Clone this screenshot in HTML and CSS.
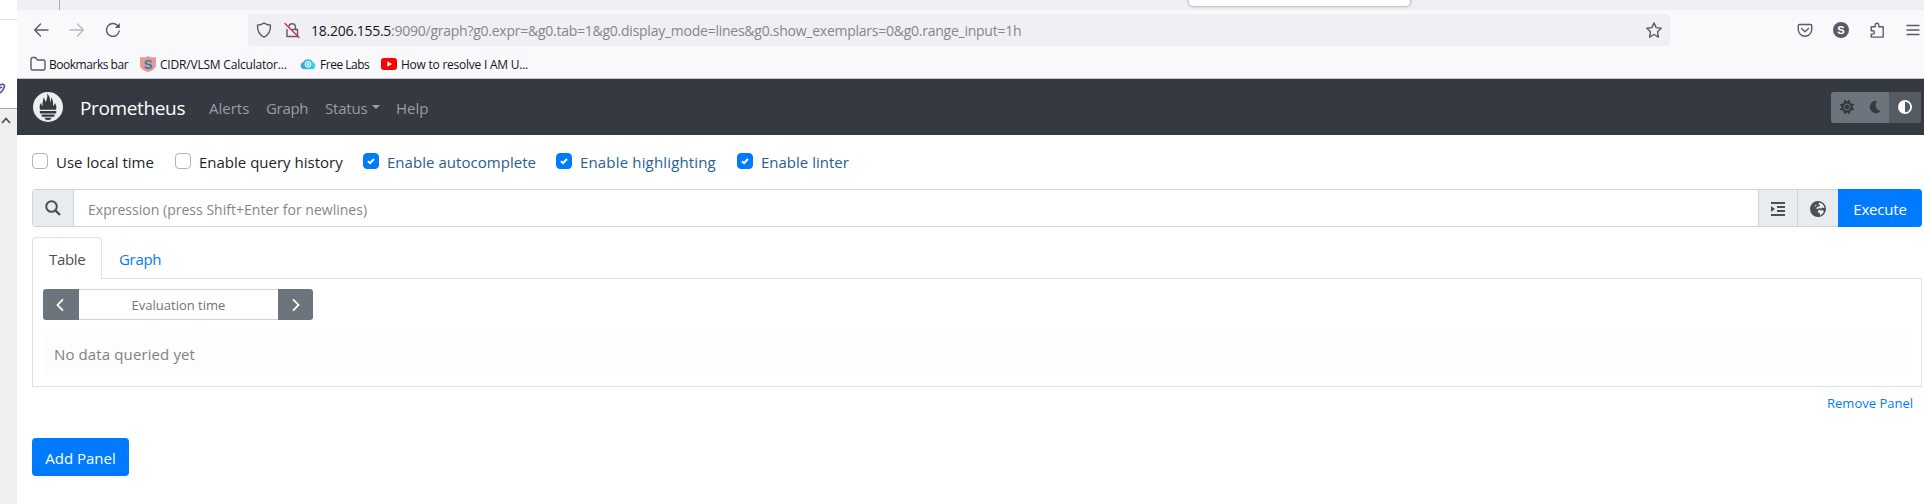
FILE: index.html
```html
<!DOCTYPE html>
<html lang="en">
<head>
<meta charset="utf-8">
<title>Prometheus</title>
<link rel="stylesheet" href="styles.css">
</head>
<body>
<div class="screen">
  <aside class="edge">
    <div class="edge-top"></div>
    <div class="edge-mid"><svg width="6" height="14" viewBox="0 0 6 14"><path d="M0 3Q4 1 4.500 4Q4 8 0 11M0 6l2-1" fill="none" stroke="#4650b8" stroke-width="1.600"/></svg></div>
    <div class="edge-bottom"><svg width="10" height="7" viewBox="0 0 10 7"><path d="M1 6l4-4.500L9 6" fill="none" stroke="#505050" stroke-width="1.800"/></svg></div>
  </aside>
  <div class="window">
    <div class="tabstrip"><div class="tab-sep"></div></div>
    <div class="popup"></div>
    <div class="toolbar">
      <svg class="ic back" viewBox="0 0 16 16"><path d="M15 8H2M7.500 2L1.700 8l5.800 6"/></svg>
      <svg class="ic fwd" viewBox="0 0 16 16"><path d="M1 8h13M8.500 2l5.800 6-5.800 6"/></svg>
      <svg class="ic reload" viewBox="0 0 16 16"><path d="M14.200 9A6.400 6.400 0 1 1 12.600 3.600"/><path d="M14.800 1v5h-5z" class="solid"/></svg>
      <div class="urlbar">
        <svg class="ic" viewBox="0 0 16 16"><path d="M8 1C6.500 2.300 4 3 1.500 3.300C1.300 8.500 3 12.800 8 15.200C13 12.800 14.700 8.500 14.500 3.300C12 3 9.500 2.300 8 1z"/></svg>
        <svg class="ic lock" viewBox="0 0 16 16"><path d="M4.800 4.500a3.400 3.400 0 0 1 6.700 0V7.500M8.500 7.500h5v7H3v-7"/><path d="M1 1.500L15 15.500" class="slash"/></svg>
        <span class="url"><b>18.206.155.5</b>:9090/graph?g0.expr=&amp;g0.tab=1&amp;g0.display_mode=lines&amp;g0.show_exemplars=0&amp;g0.range_input=1h</span>
        <svg class="ic star" viewBox="0 0 16 16"><path d="M8 .9l2.100 4.700 5.100.6-3.700 3.500.9 5.400L8 12.500l-4.400 2.600.9-5.400L.8 6.200l5.100-.6z"/></svg>
      </div>
      <div class="tools">
        <svg class="ic" viewBox="0 0 16 16"><path d="M2.500 2.500h11q1.200 0 1.200 1.200V7.500a6.700 6.700 0 0 1-13.400 0V3.700q0-1.200 1.200-1.200zM4.500 6.500L8 9.800l3.500-3.300"/></svg>
        <span class="avatar">S</span>
        <svg class="ic" viewBox="0 0 16 16"><path d="M2.200 7V4.800h4V3a1.800 1.800 0 0 1 3.600 0v1.800h4.400v10.300H2.200v-3h1.500a1.700 1.700 0 0 0 0-3.400H2.200z"/></svg>
        <svg class="ic menu" viewBox="0 0 16 16"><path d="M2 3.500h12M2 8h12M2 12.500h12"/></svg>
      </div>
    </div>
    <div class="bookmarks">
      <span class="bm b1"><svg class="ic" viewBox="0 0 16 16"><path d="M1 3q0-1.500 1.500-1.500h3L7.500 4h6Q15 4 15 5.500v7q0 1.500-1.500 1.500h-11Q1 14 1 12.500z"/></svg><span>Bookmarks bar</span></span>
      <span class="bm b2"><svg width="16" height="16" viewBox="0 0 16 16"><path d="M8 0l2.500 1.200H16v8.500Q15 14 8 16Q1 14 0 9.700V1.200h5.500z" fill="#e39a98"/><text x="8" y="12.500" text-anchor="middle" class="s-logo">S</text></svg><span>CIDR/VLSM Calculator...</span></span>
      <span class="bm b3"><svg width="16" height="16" viewBox="0 0 16 16"><defs><linearGradient id="cl"><stop offset="0" stop-color="#2fa4e6"/><stop offset="1" stop-color="#3fd6e0"/></linearGradient></defs><path d="M4 13.200a3.600 3.600 0 0 1-.8-7A5.200 4.600 0 0 1 13 6.400a3.500 3.500 0 0 1-1 6.800z" fill="url(#cl)"/><circle cx="8" cy="8.300" r="2.900" fill="#7ed5ef" stroke="#e8fbff"/><circle cx="8" cy="8.300" r="1" fill="#fff"/></svg><span>Free Labs</span></span>
      <span class="bm b4"><svg width="16" height="16" viewBox="0 0 16 16"><rect y="2" width="16" height="12" rx="3" fill="#f00"/><path d="M6.300 5.200v5.600L11 8z" fill="#fff"/></svg><span>How to resolve I AM U...</span></span>
    </div>
    <nav class="navbar">
      <svg class="logo" viewBox="0 0 32 32"><circle cx="16" cy="16" r="16" fill="#eee"/><path d="M7.500 18.800C6.700 16.500 7 14 8.500 11.500c.2 2 .8 2.800 1.800 3.500C9.500 11 11.500 9 11 5.500c1.700 1.500 2.200 3.500 2.500 5.500C14.500 8 16 5.500 15 1.500c3 2.500 3 6 3.800 9.500.5-2 .7-3.500.2-5.500 3 2.500 2 6.500 2.800 9.500.8-.8 1.300-2 1.300-3.500 1.700 2.300 2.300 4.800 1.500 7.300zM7.300 20.200h17.500v2.600H7.300zM9.200 24h13.700v2.400H9.200zM11.800 27.500h8.500Q19 30 16 30t-4.200-2.500z" fill="#353942"/></svg>
      <a class="brand">Prometheus</a>
      <a class="link-alerts">Alerts</a>
      <a class="link-graph">Graph</a>
      <a class="link-status">Status<i class="caret"></i></a>
      <a class="link-help">Help</a>
      <div class="themes">
        <span><svg width="16" height="16" viewBox="-8 -8 16 16"><path d="M0-5.500L2.700-7.500 3.500-3.700 7.300-2.800 5.300 0 7.300 2.800 3.500 3.700 2.700 7.500 0 5.500-2.700 7.500-3.500 3.700-7.300 2.800-5.300 0-7.300-2.800-3.500-3.700-2.700-7.500z" fill="#343a40"/><circle r="3" fill="none" stroke="#6c757d" stroke-width="1"/></svg></span>
        <span><svg width="14" height="14" viewBox="0 0 14 14"><path d="M9.500 1A6.200 6.200 0 1 0 12.800 11A5.700 5.700 0 0 1 9.500 1z" fill="#343a40"/></svg></span>
        <span class="on"><svg width="14" height="14" viewBox="0 0 14 14"><circle cx="7" cy="7" r="6.100" fill="none" stroke="#fff" stroke-width="1.800"/><path d="M7 1v12A6 6 0 0 1 7 1z" fill="#fff"/></svg></span>
      </div>
    </nav>
    <main class="page">
      <div class="options">
        <label class="o1"><i></i>Use local time</label>
        <label class="o2"><i></i>Enable query history</label>
        <label class="o3 on"><i><svg viewBox="0 0 8 8"><path d="M1 4.200l2.100 2L7 2"/></svg></i>Enable autocomplete</label>
        <label class="o4 on"><i><svg viewBox="0 0 8 8"><path d="M1 4.200l2.100 2L7 2"/></svg></i>Enable highlighting</label>
        <label class="o5 on"><i><svg viewBox="0 0 8 8"><path d="M1 4.200l2.100 2L7 2"/></svg></i>Enable linter</label>
      </div>
      <div class="query">
        <span class="cell search"><svg width="16" height="16" viewBox="0 0 16 16"><circle cx="6.500" cy="6.500" r="5.300" fill="none" stroke="#495057" stroke-width="2"/><path d="M10.400 10.400L15 15" stroke="#495057" stroke-width="2.400"/></svg></span>
        <div class="expr">Expression (press Shift+Enter for newlines)</div>
        <span class="cell indent"><svg width="14" height="14" viewBox="0 0 14 14"><path d="M0 1h14M6 5h8M6 9h8M0 13h14" stroke="#495057" stroke-width="1.800"/><path d="M0 4v6l4-3z" fill="#495057"/></svg></span>
        <span class="cell globe"><svg width="16" height="16" viewBox="0 0 16 16"><circle cx="8" cy="8" r="7.200" fill="#495057" stroke="#495057" stroke-width="1.600"/><path d="M9 1.600Q13.800 2.500 14.500 7.200L12.500 6.500 11.500 7.500 9.500 7 7.500 8 6 7.200 8 5.500 9.500 5.500 10 4 8.500 3.200zM8 9.800l2-1.300 1 1 1.500-.5 1.500 1.500Q12.500 13.500 10 14.500L9.800 12 7.800 11.500zM6.800 3.500L5.200 4.200 4.500 5.500 6 5z" fill="#e9ecef"/></svg></span>
        <button class="btn exec">Execute</button>
      </div>
      <div class="tabs"><span class="tab active">Table</span><span class="tab link">Graph</span></div>
      <div class="pane">
        <div class="time"><span class="step"><svg width="8" height="14" viewBox="0 0 8 14"><path d="M7 1.300L1.500 7 7 12.700"/></svg></span><span class="field">Evaluation time</span><span class="step next"><svg width="8" height="14" viewBox="0 0 8 14"><path d="M1 1.300L6.500 7 1 12.700"/></svg></span></div>
        <div class="alert">No data queried yet</div>
      </div>
      <div class="remove">Remove Panel</div>
      <button class="btn add">Add Panel</button>
    </main>
  </div>
</div>
</body>
</html>
```
FILE: styles.css
```css
* { box-sizing: border-box; }
body { margin: 0; font: 15px/24px "Open Sans", "Noto Sans", sans-serif; color: #212529; background: #fff; }
svg { display: block; flex: none; }
.screen { display: flex; width: 1924px; height: 504px; overflow: hidden; }

/* Strip of the neighbouring window */
.edge { width: 17px; display: flex; flex-direction: column; background: #fff; }
.edge-top { height: 20px; border-bottom: 1px solid #e3e3e6; }
.edge-mid { height: 88px; padding-top: 62px; }
.edge-bottom { flex: 1; border-top: 1px solid #a9a9a9; background: #efefef; padding: 8px 0 0 1px; }

/* Browser chrome */
.window { position: relative; flex: 1; display: flex; flex-direction: column; }
.tabstrip { height: 10px; background: #f0f0f4; padding-left: 42px; }
.tab-sep { width: 1px; height: 10px; background: #a8a8b0; }
.popup { position: absolute; left: 1172px; top: -10px; width: 221px; height: 16px; border-radius: 4px; background: #fff; box-shadow: 0 0 3px rgba(0,0,0,.5); }
.ic { width: 16px; height: 16px; fill: none; stroke: #5b5b66; stroke-width: 1.4; stroke-linejoin: round; stroke-linecap: round; }
.solid { fill: #5b5b66; stroke: none; }
.toolbar { height: 40px; background: #f9f9fb; display: flex; align-items: center; padding-left: 16px; }
.fwd { margin-left: 20px; stroke: #b9b9c0; }
.reload { margin-left: 20px; }
.urlbar { margin-left: 127px; width: 1422px; height: 32px; border-radius: 4px; background: #f0f0f4; display: flex; align-items: center; padding: 0 8px; }
.lock { margin-left: 12px; }
.slash { stroke: #e22850; }
.url { margin-left: 11px; padding-top: 2px; font-size: 14px; letter-spacing: -.25px; color: #85858c; white-space: nowrap; }
.url b { font-weight: 400; color: #15141a; }
.star { margin-left: auto; }
.tools { display: flex; align-items: center; gap: 20px; margin-left: 127px; }
.avatar { width: 16px; height: 16px; border-radius: 50%; background: #5b5b66; color: #fff; font: bold 11px/16px "Liberation Sans", sans-serif; text-align: center; }
.bookmarks { height: 29px; background: #f9f9fb; border-bottom: 1px solid #c6c6ca; display: flex; padding: 2px 0 0 13px; font-size: 12px; line-height: 24px; color: #15141a; }
.bm { display: flex; align-items: center; gap: 4px; white-space: nowrap; height: 24px; }
.bm span { padding-top: 2px; }
.b1 { width: 110px; gap: 3px; letter-spacing: -.47px; }
.b2 { width: 160px; letter-spacing: -.2px; }
.b3 { width: 81px; letter-spacing: -.48px; }
.b4 { letter-spacing: -.24px; }
.s-logo { font: bold 13px "Liberation Sans", sans-serif; fill: #2c7fa8; }

/* Prometheus navigation */
.navbar { height: 56px; background: #353942; display: flex; align-items: center; padding: 0 3px 0 16px; color: #9a9da1; }
.navbar a { padding-top: 2px; }
.logo { width: 30px; height: 30px; }
.brand { width: 105px; color: #fff; font-size: 19px; letter-spacing: -.36px; margin-left: 17px; }
.link-alerts { width: 57px; margin-left: 24px; }
.link-graph { width: 59px; letter-spacing: -.3px; }
.link-status { width: 71px; letter-spacing: -.2px; display: flex; align-items: center; }
.caret { border: 4px solid transparent; border-top-color: #9a9da1; border-bottom: 0; margin: -3px 0 0 5px; }
.themes { margin-left: auto; display: flex; width: 90px; height: 31px; border-radius: 3px; overflow: hidden; background: #6c757d; }
.themes span { width: 29px; display: flex; align-items: center; justify-content: center; }
.themes span:first-child { padding-left: 3px; }
.themes .on { width: 32px; background: #545b62; }

/* Query page */
.page { flex: 1; padding: 18px 2px 0 15px; }
.options { display: flex; height: 36px; }
.options label { display: flex; gap: 8px; height: 18px; align-items: center; white-space: nowrap; }
.options i { width: 16px; height: 16px; margin-top: -2px; border: 1px solid #adb5bd; border-radius: 4px; flex: none; display: flex; align-items: center; justify-content: center; }
.options .on { color: #286090; }
.options .on i { background: #007bff; border-color: #007bff; }
.options i svg { width: 8px; height: 8px; fill: none; stroke: #fff; stroke-width: 2; }
.o1 { width: 143px; }
.o2 { width: 188px; }
.o3 { width: 193px; letter-spacing: .04px; }
.o4 { width: 181px; letter-spacing: .16px; }
.query { height: 38px; display: flex; border: 1px solid #ced4da; border-right: 0; border-radius: 4px; }
.cell { background: #e9ecef; display: flex; align-items: center; justify-content: center; }
.search { width: 41px; border-right: 1px solid #ced4da; }
.expr { flex: 1; display: flex; align-items: center; padding: 3px 0 0 14px; font-size: 14px; letter-spacing: .02px; color: #868686; }
.indent { width: 39px; border-left: 1px solid #ced4da; padding-top: 2px; }
.globe { width: 41px; border-left: 1px solid #ced4da; padding-top: 2px; }
.btn { font: inherit; color: #fff; background: #007bff; border: 0; padding: 2px 0 0; height: 38px; border-radius: 4px; }
.exec { width: 84px; margin: -1px 0; border-radius: 0 4px 4px 0; letter-spacing: -.2px; }
.tabs { display: flex; margin-top: 10px; height: 41px; }
.tab { display: flex; align-items: center; padding: 3px 17px 0; letter-spacing: -.3px; }
.active { width: 70px; height: 42px; border: 1px solid #dee2e6; border-bottom: 0; border-radius: 4px 4px 0 0; background: #fff; color: #495057; position: relative; padding: 1px 0 0 16px; }
.link, .remove { color: #007bff; }
.pane { height: 109px; border: 1px solid #dee2e6; padding: 10px; }
.time { display: flex; width: 270px; height: 31px; font-size: 13px; color: #6c757d; }
.step { width: 36px; background: #6c757d; border-radius: 3px 0 0 3px; display: flex; align-items: center; justify-content: center; padding-right: 2px; }
.step.next { width: 35px; border-radius: 0 3px 3px 0; padding: 0 0 0 1px; }
.step svg { fill: none; stroke: #fff; stroke-width: 1.8; }
.field { flex: 1; border: solid #ced4da; border-width: 1px 0; display: flex; align-items: center; justify-content: center; padding-top: 1px; }
.alert { margin-top: 10px; height: 46px; background: #fdfdfd; border-radius: 4px; display: flex; align-items: center; padding: 2px 11px 0; color: #818182; letter-spacing: .12px; }
.remove { display: flex; justify-content: flex-end; padding: 4px 9px 0 0; height: 51px; font-size: 13px; }
.add { width: 97px; }
```
